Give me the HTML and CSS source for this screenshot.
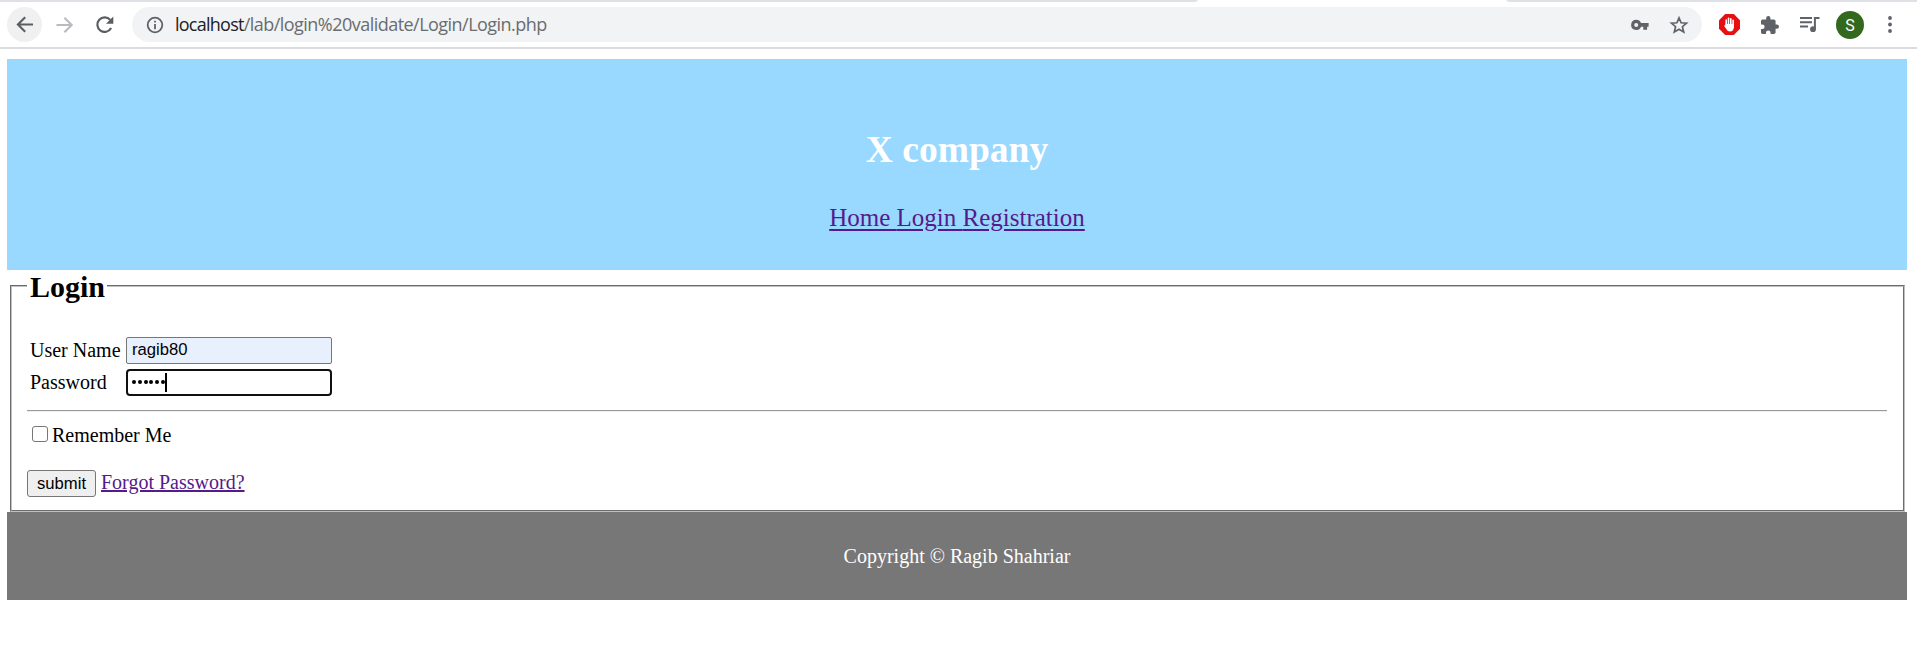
FILE: index.html
```html
<!DOCTYPE html>
<html lang="en">
<head>
<meta charset="utf-8">
<title>Login</title>
<link rel="stylesheet" href="styles.css">
</head>
<body>
<div class="browser">
  <div class="tab-edge"><svg width="1917" height="2" viewBox="0 0 1917 2"><path d="M0 0H1198Q1197 2 1195 2H0ZM1506 0H1917V2H1510Q1507 2 1506 0Z" fill="#dee1e6"/></svg></div>
  <div class="toolbar">
    <span class="back"><svg width="35" height="35" viewBox="0 0 35 35" fill="none" stroke="#5a5d61" stroke-width="2.1"><path d="M26 17.5H11M18.2 10.2L10.9 17.5L18.2 24.8"/></svg></span>
    <svg class="forward" width="18" height="18" viewBox="0 0 18 18" fill="none" stroke="#b9bbbe" stroke-width="2.1"><path d="M.5 9H15.5M8.4 1.7L15.7 9L8.4 16.3"/></svg>
    <svg class="reload" width="20" height="20" viewBox="0 0 20 20"><path d="M16.1 13.1A7.3 7.3 0 1 1 15.2 4.9" fill="none" stroke="#5a5d61" stroke-width="2.2"/><path d="M18.3 1.5V8.7H11Z" fill="#5a5d61"/></svg>
    <div class="address">
      <svg class="info" width="18" height="18" viewBox="0 0 18 18"><circle cx="9" cy="9" r="7.3" fill="none" stroke="#5f6368" stroke-width="1.8"/><path d="M8.1 8H9.9V13.2H8.1ZM8.1 4.8H9.9V6.6H8.1Z" fill="#5f6368"/></svg>
      <span class="url"><span class="host">localhost</span><span class="path">/lab/login%20validate/Login/Login.php</span></span>
      <svg class="key" width="18" height="12" viewBox="0 0 18 12"><path fill="#5f6368" fill-rule="evenodd" d="M5.2.8A5.2 5.2 0 0 1 10 4H17.6V7.8H16.1V10.8H12.3V7.8H10A5.1 5.1 0 1 1 5.2.8ZM5.2 4A2 2 0 1 0 5.2 8A2 2 0 1 0 5.2 4Z"/></svg>
      <svg class="star" width="20" height="20" viewBox="0 0 20 20"><path d="M10 2.9L12.1 7.8L17.5 8.2L13.4 11.7L14.7 17L10 14.2L5.3 17L6.6 11.7L2.5 8.2L7.9 7.8Z" fill="none" stroke="#5f6368" stroke-width="1.7"/></svg>
    </div>
    <svg class="block" width="21" height="21" viewBox="0 0 21 21"><path d="M6.2 0H14.8L21 6.2V14.8L14.8 21H6.2L0 14.8V6.2Z" fill="#e90e12"/><path d="M7.2 13V6M9.5 11V4.2M11.8 11V4.7M14.1 13V6.4" stroke="#fff" stroke-width="1.6" stroke-linecap="round"/><path d="M6.4 10H14.9V13.2Q14.5 17.5 11 17.5Q8.4 17.5 7.3 15L5 11.7Q5.3 10.8 6.4 11.8Z" fill="#fff"/></svg>
    <svg class="puzzle" width="18" height="18" viewBox="2 1 21 21"><path fill="#5f6368" d="M20.5 11H19V7c0-1.1-.9-2-2-2h-4V3.5a2.5 2.5 0 0 0-5 0V5H4c-1.1 0-2 .9-2 2v3.8h1.5a2.7 2.7 0 0 1 0 5.4H2V20c0 1.1.9 2 2 2h3.8v-1.5a2.7 2.7 0 0 1 5.4 0V22H17c1.1 0 2-.9 2-2v-4h1.5a2.5 2.5 0 0 0 0-5Z"/></svg>
    <svg class="queue" width="20" height="17" viewBox="0 0 20 17"><path d="M0 2H12M0 6.3H12M0 10.6H8M14.9 13V2H19.5" fill="none" stroke="#5f6368" stroke-width="2"/><circle cx="13" cy="13.2" r="2.9" fill="#5f6368"/></svg>
    <span class="avatar">S</span>
    <svg class="more" width="4" height="17" viewBox="0 0 4 17" fill="#5f6368"><circle cx="2" cy="2" r="1.9"/><circle cx="2" cy="8.5" r="1.9"/><circle cx="2" cy="15" r="1.9"/></svg>
  </div>
</div>
<main class="page">
  <header class="banner">
    <h1>X company</h1>
    <nav><a href="#">Home </a><a href="#">Login </a><a href="#">Registration</a></nav>
  </header>
  <fieldset class="login">
    <legend>Login</legend>
    <div class="fields">
      <label for="user">User Name</label><input id="user" class="filled" type="text" value="ragib80">
      <label for="pass">Password</label><div class="password" id="pass"><span class="dots"><i></i><i></i><i></i><i></i><i></i><i></i></span><span class="caret"></span></div>
    </div>
    <hr>
    <label class="remember"><input type="checkbox">Remember Me</label>
    <div class="actions"><button type="button">submit</button><a href="#">Forgot Password?</a></div>
  </fieldset>
  <footer>Copyright © Ragib Shahriar</footer>
</main>
</body>
</html>
```
FILE: styles.css
```css
* { box-sizing: border-box; }
body { margin: 0; background: #fff; color: #000; font: 20px/23px "Liberation Serif", serif; overflow: hidden; }
svg { display: block; flex: none; }
a { color: #551a8b; text-decoration: underline; text-decoration-thickness: 2px; }

.browser { height: 49px; border-bottom: 2px solid #dadce0; }
.tab-edge { height: 2px; }
.toolbar { display: flex; align-items: center; height: 45px; padding-left: 7px; }
.back { width: 35px; height: 35px; border-radius: 50%; background: #f0f0f0; }
.forward { margin-left: 14px; }
.reload { margin-left: 21px; }
.address { display: flex; align-items: center; width: 1570px; height: 35px; margin-left: 17px; padding-left: 13px; border-radius: 18px; background: #f1f3f4; }
.info { margin-left: 1px; }
.url { flex: 1; margin-left: 11px; padding-bottom: 2px; font: 18px/24px "Open Sans", "Noto Sans", sans-serif; white-space: nowrap; color: #696c70; }
.host { color: #202124; letter-spacing: -.75px; }
.path { letter-spacing: -.53px; }
.key { margin-right: 20px; }
.star { margin-right: 13px; }
.block { margin-left: 17px; }
.puzzle { margin-left: 21px; }
.queue { margin-left: 21px; }
.avatar { width: 28px; height: 28px; margin-left: 16px; border-radius: 50%; background: #33691e; color: #fff; font: 16px/29px Roboto, sans-serif; text-align: center; }
.more { margin-left: 24px; }

.page { width: 1900px; margin: 10px 0 0 7px; }
.banner { height: 211px; padding-top: 69px; background: #99d8ff; color: #fff; text-align: center; }
.banner h1 { margin: 0; font-size: 37.5px; line-height: 43px; }
.banner nav { margin-top: 32px; font-size: 25px; line-height: 29px; }
.banner a { text-underline-offset: 3px; white-space: pre; }
.login { height: 242px; margin: 0 2.5px 0 3px; padding: 0 16px; border: 2px groove #c0c0c0; min-width: 0; }
.login legend { padding: 2px 2px 0 3px; margin-left: -1px; font-size: 30px; font-weight: bold; line-height: 30px; }
.fields { display: grid; grid-template-columns: 93px 206px; grid-template-rows: 27px 27px; gap: 5px 3px; margin: 35px 0 0 2px; align-items: center; }
.fields input { width: 206px; height: 27px; margin: 0; padding: 1px 4px 3px 5px; border: 1px solid #767676; border-radius: 2px; font: 16.667px "Liberation Sans", sans-serif; outline: 0; }
.fields .filled { background: #e8f0fe; }
.password { display: flex; align-items: center; height: 27px; padding-left: 4px; border: 2px solid #101010; border-radius: 4px; }
.dots { display: flex; gap: 1.8px; padding-bottom: 2px; }
.dots i { width: 4px; height: 4px; border-radius: 50%; background: #000; }
.caret { width: 2px; height: 19px; background: #000; }
hr { height: 2px; margin: 14px 0 0 -1px; border: 0; border-top: 1px solid #9a9a9a; border-bottom: 1px solid #eee; }
.remember { display: flex; align-items: center; height: 23px; margin-top: 12px; padding-left: 4px; }
.remember input { width: 16px; height: 16px; margin: 0 4px 3px 0; appearance: none; border: 1px solid #767676; border-radius: 3px; background: #fff; }
.actions { display: flex; gap: 5px; margin: 23px 0 0 -1px; }
.actions a { padding-top: 1px; }
.actions button { width: 69px; height: 27px; padding: 0; border: 1px solid #767676; border-radius: 3px; background: #efefef; color: #000; font: 16.667px "Liberation Sans", sans-serif; }
footer { height: 88px; padding-top: 33px; background: #777; color: #fff; text-align: center; }
```
